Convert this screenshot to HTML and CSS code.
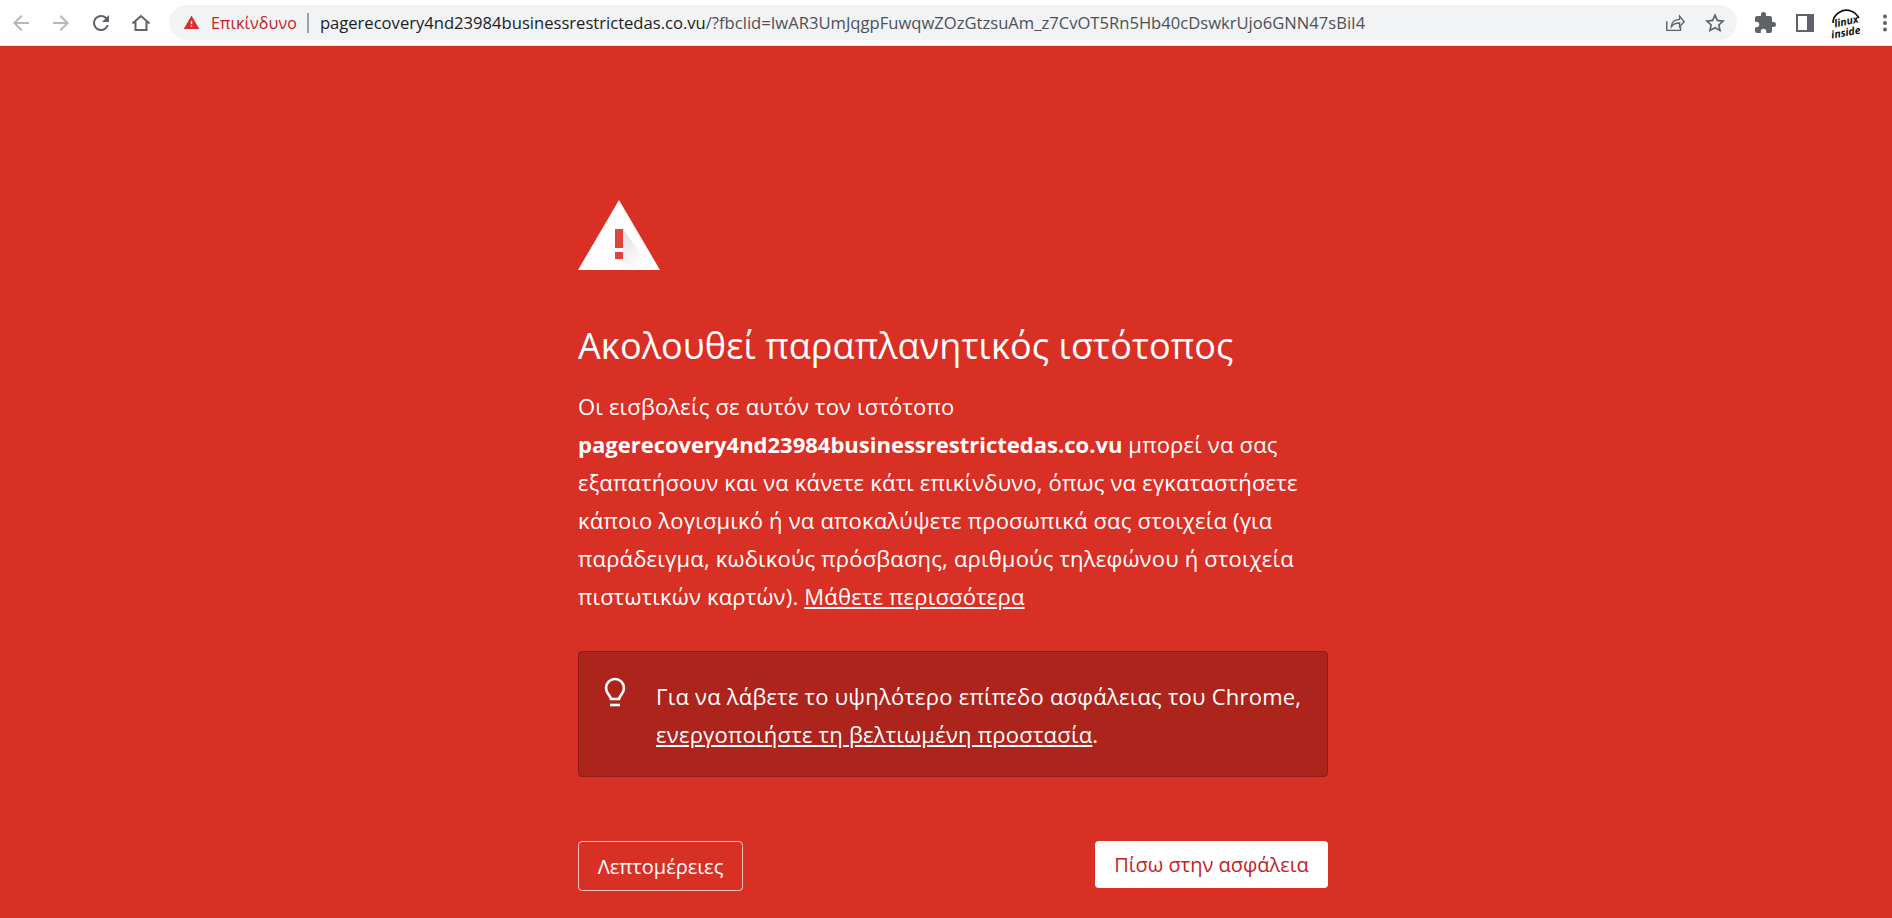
FILE: index.html
```html
<!DOCTYPE html>
<html lang="el">
<head>
    <meta charset="UTF-8">
    <title>Ασφαλής περιήγηση</title>
    <link rel="stylesheet" href="styles.css">
</head>
<body>
    <div class="toolbar">
        <svg class="tool-icon" viewBox="0 0 24 24" fill="#b4b7bb"><path d="M20 11H7.830l5.590-5.590L12 4l-8 8 8 8 1.410-1.410L7.830 13H20v-2z"/></svg>
        <svg class="tool-icon" viewBox="0 0 24 24" fill="#b4b7bb"><path d="M12 4l-1.410 1.410L16.170 11H4v2h12.170l-5.580 5.590L12 20l8-8z"/></svg>
        <svg class="tool-icon" viewBox="0 0 24 24" fill="#5f6368"><path d="M17.650 6.350A7.960 7.960 0 0 0 12 4a8 8 0 1 0 7.730 10h-2.080A6 6 0 1 1 12 6c1.660 0 3.140.69 4.220 1.780L13 11h7V4l-2.350 2.350z"/></svg>
        <svg class="tool-icon" viewBox="0 0 24 24" fill="none" stroke="#5f6368" stroke-width="2"><path d="M3.500 12.500L12 5l8.500 7.500"/><path d="M6.500 10.500V19h11v-8.500"/></svg>

        <div class="omnibox">
            <svg class="danger-icon" viewBox="0 0 24 24" fill="#d93025"><path d="M1 21h22L12 2 1 21zm12-3h-2v-2h2v2zm0-4h-2v-4h2v4z"/></svg>
            <span class="danger-label">Επικίνδυνο</span>
            <span class="divider"></span>
            <span class="url">pagerecovery4nd23984businessrestrictedas.co.vu<span class="url-rest">/?fbclid=IwAR3UmJqgpFuwqwZOzGtzsuAm_z7CvOT5Rn5Hb40cDswkrUjo6GNN47sBiI4</span></span>
            <span class="omnibox-end">
                <svg class="omni-icon" viewBox="0 0 24 24" fill="none" stroke="#5f6368" stroke-width="1.500"><path d="M3 10v10h15v-4"/><path d="M8 16c0-5 4-8 9-8V4.500l5 6-5 5.500v-4c-4 0-7 1-9 4z"/></svg>
                <svg class="omni-icon" viewBox="0 0 24 24" fill="none" stroke="#5f6368" stroke-width="1.800"><path d="M12 3.500l2.600 5.700 6.200.7-4.600 4.200 1.300 6.100L12 17.200l-5.500 3 1.300-6.100-4.600-4.200 6.200-.7z"/></svg>
            </span>
        </div>

        <svg class="tool-icon" viewBox="0 0 24 24" fill="#5f6368"><path d="M20.500 11H19V7a2 2 0 0 0-2-2h-4V3.500a2.500 2.500 0 0 0-5 0V5H4a2 2 0 0 0-2 2v3.800h1.500a2.700 2.700 0 0 1 0 5.400H2V20a2 2 0 0 0 2 2h3.800v-1.500a2.700 2.700 0 0 1 5.400 0V22H17a2 2 0 0 0 2-2v-4h1.500a2.500 2.500 0 0 0 0-5z"/></svg>
        <svg class="tool-icon" viewBox="0 0 24 24"><path d="M3 3h18v18H3z" fill="#5f6368"/><path d="M5 5h9v14H5z" fill="#fff"/></svg>
        <div class="avatar">
            <svg class="swoosh" viewBox="0 0 30 30" fill="none" stroke="#111" stroke-width="1.600"><path d="M2 15C2 6 12 0 20 3c3 1 6 4 8 7"/></svg>
            <span class="avatar-top">linux</span>
            <span class="avatar-bottom">inside</span>
        </div>
        <svg class="menu" viewBox="0 0 12 24" fill="#5f6368"><circle cx="6" cy="5.500" r="2"/><circle cx="6" cy="12" r="2"/><circle cx="6" cy="18.500" r="2"/></svg>
    </div>

    <div class="interstitial">
        <div class="content">
            <svg class="warning" viewBox="0 0 82 70">
                <defs>
                    <linearGradient id="shade" x1="0.1" y1="0.1" x2="0.9" y2="0.9">
                        <stop offset="0" stop-color="#dedede"/>
                        <stop offset="1" stop-color="#fff"/>
                    </linearGradient>
                </defs>
                <path d="M41 0L82 70H0z" fill="#fff"/>
                <path d="M45 29l22 30-10 8-20-8v-7h8z" fill="url(#shade)"/>
                <path d="M37 29h8v19h-8zM37 52h8v7h-8z" fill="#e0443a"/>
            </svg>
            <h1>Ακολουθεί παραπλανητικός ιστότοπος</h1>
            <p class="message">Οι εισβολείς σε αυτόν τον ιστότοπο <strong>pagerecovery4nd23984businessrestrictedas.co.vu</strong> μπορεί να σας εξαπατήσουν και να κάνετε κάτι επικίνδυνο, όπως να εγκαταστήσετε κάποιο λογισμικό ή να αποκαλύψετε προσωπικά σας στοιχεία (για παράδειγμα, κωδικούς πρόσβασης, αριθμούς τηλεφώνου ή στοιχεία πιστωτικών καρτών). <a href="#">Μάθετε περισσότερα</a></p>
            <div class="tip">
                <svg class="bulb" viewBox="0 0 24 30" fill="none" stroke="#fff" stroke-width="2.600"><path d="M8 22c0-3-5-5-5-11a9 9 0 0 1 18 0c0 6-5 8-5 11z"/><path d="M7 28h10"/></svg>
                <div>Για να λάβετε το υψηλότερο επίπεδο ασφάλειας του Chrome, <a href="#">ενεργοποιήστε τη βελτιωμένη προστασία</a>.</div>
            </div>
            <div class="buttons">
                <button class="details-button">Λεπτομέρειες</button>
                <button class="back-button">Πίσω στην ασφάλεια</button>
            </div>
        </div>
    </div>
</body>
</html>
```

FILE: styles.css
```css
* {
    margin: 0;
    padding: 0;
    box-sizing: border-box;
}

html, body {
    height: 100%;
    overflow: hidden;
}

body {
    font-family: "Open Sans", "Noto Sans", sans-serif;
    display: flex;
    flex-direction: column;
    background: #d93025;
}

.toolbar {
    height: 46px;
    flex-shrink: 0;
    background: #fff;
    display: flex;
    align-items: center;
    gap: 16px;
    padding: 0 1px 0 9px;
    border-bottom: 1px solid #e4e4e4;
}

.tool-icon {
    width: 24px;
    height: 24px;
    flex-shrink: 0;
}

.omnibox {
    flex: 1;
    height: 35px;
    background: #f1f3f4;
    border-radius: 18px;
    display: flex;
    align-items: center;
    padding: 0 11px 0 14px;
    font-size: 16px;
    white-space: nowrap;
}

.danger-icon {
    width: 17px;
    height: 17px;
    margin-right: 11px;
}

.danger-label {
    color: #c5221f;
    letter-spacing: 0.1px;
}

.divider {
    width: 2px;
    height: 20px;
    background: #9aa0a6;
    margin: 0 11px 0 10px;
}

.url {
    color: #202124;
    font-size: 16.6px;
}

.url-rest {
    color: #4d5156;
}

.omnibox-end {
    margin-left: auto;
    display: flex;
    gap: 18px;
}

.omni-icon {
    width: 22px;
    height: 22px;
}

.avatar {
    position: relative;
    width: 30px;
    height: 30px;
    background: #fff;
    display: flex;
    flex-direction: column;
    align-items: center;
    justify-content: flex-end;
    font-size: 10.5px;
    line-height: 11px;
    font-weight: 700;
    font-style: italic;
    color: #111;
    flex-shrink: 0;
    margin: 0 2px 0 -2px;
}

.swoosh {
    position: absolute;
    top: 0;
    left: 0;
    width: 30px;
    height: 30px;
}

.avatar-top {
    transform: rotate(-12deg);
}

.avatar-bottom {
    transform: rotate(-10deg);
}

.menu {
    width: 12px;
    height: 24px;
    flex-shrink: 0;
}

.interstitial {
    flex: 1;
    color: #fff;
}

.content {
    width: 750px;
    margin-left: 578px;
    padding-top: 154px;
}

.warning {
    display: block;
    width: 82px;
    height: 70px;
}

h1 {
    font-size: 36px;
    font-weight: 400;
    line-height: 48px;
    margin-top: 52px;
    letter-spacing: 0.1px;
}

.message {
    font-size: 22px;
    line-height: 38px;
    margin-top: 17px;
    letter-spacing: 0.2px;
}

.message strong {
    font-weight: 700;
    letter-spacing: 0;
}

a {
    color: #fff;
    text-decoration: underline;
}

.tip {
    margin-top: 36px;
    height: 126px;
    background: #ad241c;
    border: 1px solid #8f1c16;
    border-radius: 4px;
    display: flex;
    gap: 29px;
    padding: 25px 24px;
    font-size: 22px;
    line-height: 38px;
    letter-spacing: 0.24px;
}

.bulb {
    width: 24px;
    height: 30px;
    flex-shrink: 0;
}

.buttons {
    display: flex;
    justify-content: space-between;
    align-items: flex-start;
    margin-top: 64px;
}

button {
    font-family: inherit;
    font-size: 20px;
    border-radius: 4px;
    cursor: pointer;
}

.details-button {
    width: 165px;
    height: 50px;
    background: transparent;
    border: 1px solid #f4c4c0;
    color: #fff;
}

.back-button {
    width: 233px;
    height: 47px;
    background: #fff;
    border: 0;
    color: #c5221f;
}
```
